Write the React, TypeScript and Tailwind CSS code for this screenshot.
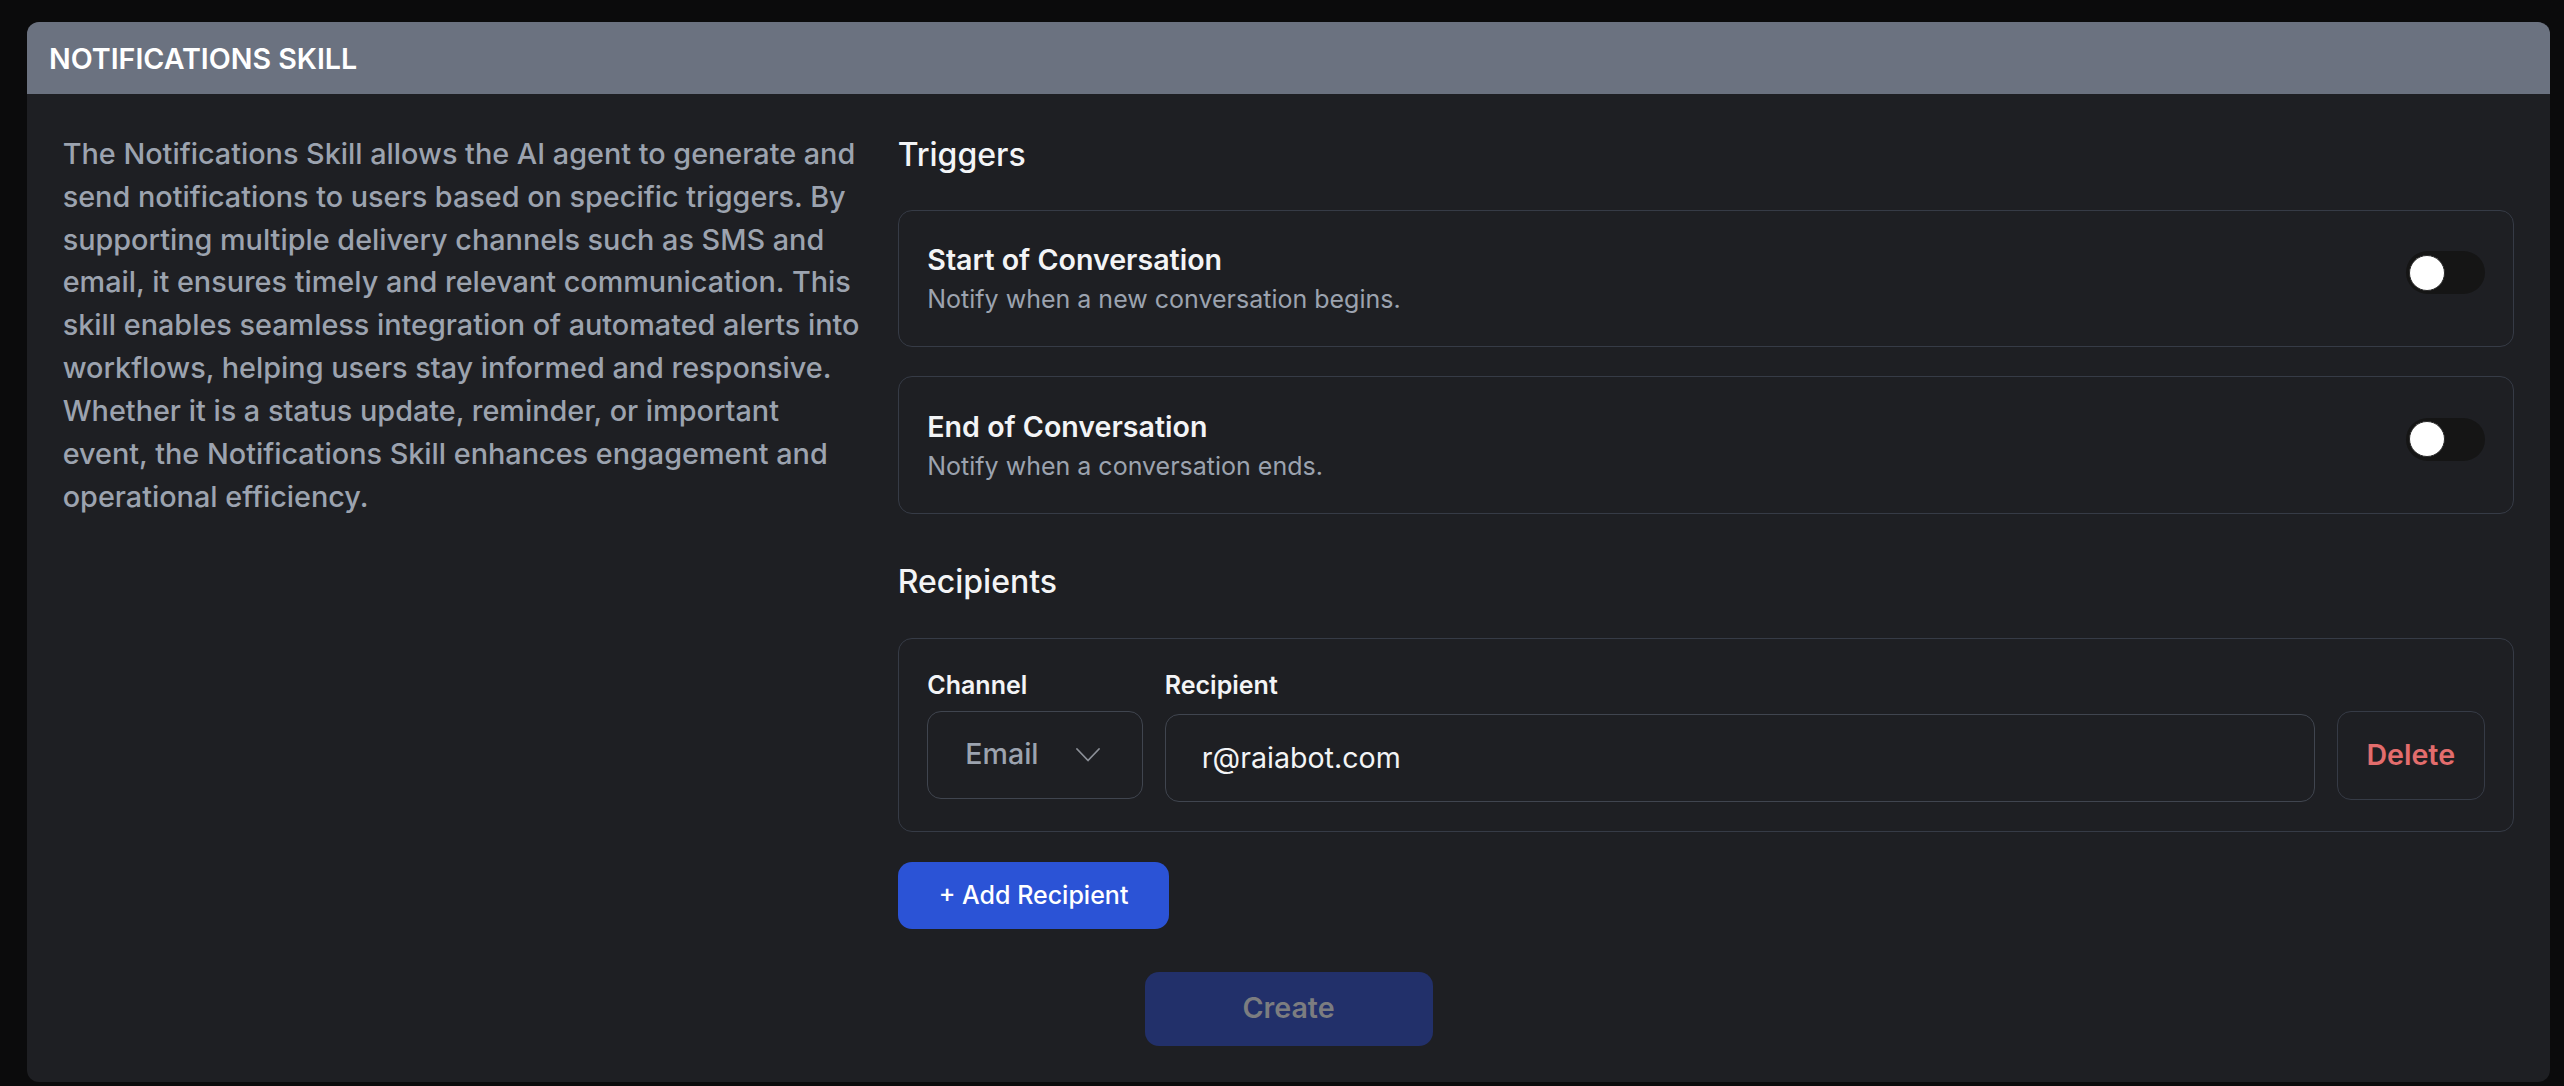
import React from "react";

function Toggle() {
  return (
    <div className="relative mt-[12px] h-[43px] w-[79px] shrink-0 rounded-full bg-[#151515]">
      <div className="absolute left-[3.5px] top-[3.5px] h-[36px] w-[36px] rounded-full border border-[#2a2a2a] bg-white" />
    </div>
  );
}

function TriggerCard({ title, desc }: { title: string; desc: string }) {
  return (
    <div className="flex items-start justify-between rounded-[14px] border border-[#363b46] p-[28.6px]">
      <div>
        <div className="text-[28.6px] font-semibold leading-[42.9px] text-[#f3f4f6]">{title}</div>
        <div className="text-[25px] leading-[35.7px] text-[#9ca3af]">{desc}</div>
      </div>
      <Toggle />
    </div>
  );
}

export default function App() {
  return (
    <div className="min-h-screen bg-[#0b0b0c] pl-[27px] pr-[14px] pt-[22px] font-['Inter',sans-serif]">
      <div className="overflow-hidden rounded-[12px] bg-[#1e1f23]">
        <div className="bg-[#6b7280] px-[22px] py-[14.5px] text-[28.6px] font-semibold leading-[43px] text-white">
          NOTIFICATIONS SKILL
        </div>
        <div className="p-[35.7px]">
          <div className="flex gap-[35px]">
            <p className="mt-[3px] w-[800px] shrink-0 text-[28.8px] font-medium leading-[42.9px] text-[#9ca3af]">
              The Notifications Skill allows the AI agent to generate and send notifications to users based on
              specific triggers. By supporting multiple delivery channels such as SMS and email, it ensures timely
              and relevant communication. This skill enables seamless integration of automated alerts into
              workflows, helping users stay informed and responsive. Whether it is a status update, reminder, or
              important event, the Notifications Skill enhances engagement and operational efficiency.
            </p>
            <div className="min-w-0 flex-1">
              <h3 className="mb-[30px] text-[32px] font-medium leading-[50px] text-[#f3f4f6]">Triggers</h3>
              <div className="flex flex-col gap-[28.6px]">
                <TriggerCard title="Start of Conversation" desc="Notify when a new conversation begins." />
                <TriggerCard title="End of Conversation" desc="Notify when a conversation ends." />
              </div>

              <h3 className="mt-[43px] text-[32px] font-medium leading-[50px] text-[#f3f4f6]">Recipients</h3>
              <div className="mt-[31.5px] rounded-[14px] border border-[#363b46] p-[28.6px]">
                <div className="flex gap-[21.5px]">
                  <div className="w-[216px] shrink-0">
                    <div className="text-[25px] font-semibold leading-[35.7px] text-[#f3f4f6]">Channel</div>
                    <div className="mt-[7px] flex h-[88px] items-center justify-between rounded-[14px] border border-[#40454f] pl-[37px] pr-[42px]">
                      <span className="text-[28.6px] font-medium text-[#9ca3af]">Email</span>
                      <svg width="24" height="14" viewBox="0 0 24 14" fill="none">
                        <polyline
                          points="1,1 12,12.5 23,1"
                          stroke="#8b8f97"
                          strokeWidth="1.8"
                          strokeLinecap="round"
                          strokeLinejoin="round"
                        />
                      </svg>
                    </div>
                  </div>
                  <div className="min-w-0 flex-1">
                    <div className="text-[25px] font-semibold leading-[35.7px] text-[#f3f4f6]">Recipient</div>
                    <div className="mt-[10.6px] flex h-[88px] items-center rounded-[14px] border border-[#40454f] px-[36px] text-[28.6px] text-[#f3f4f6]">
                      r@raiabot.com
                    </div>
                  </div>
                  <button className="mt-[43px] flex h-[89px] w-[148px] shrink-0 items-center justify-center rounded-[14px] border border-[#363b46] text-[28.6px] font-semibold text-[#e36d6d]">
                    Delete
                  </button>
                </div>
              </div>

              <button className="mt-[30px] flex h-[67px] items-center rounded-[14px] bg-[#2b53d6] px-[41px] text-[25px] font-medium text-white">
                + Add Recipient
              </button>
            </div>
          </div>
          <div className="mt-[43px] flex justify-center">
            <button className="flex h-[74px] w-[288px] items-center justify-center rounded-[14px] bg-[#22306a] text-[28.6px] font-semibold text-[#7c7d80]">
              Create
            </button>
          </div>
        </div>
      </div>
    </div>
  );
}
